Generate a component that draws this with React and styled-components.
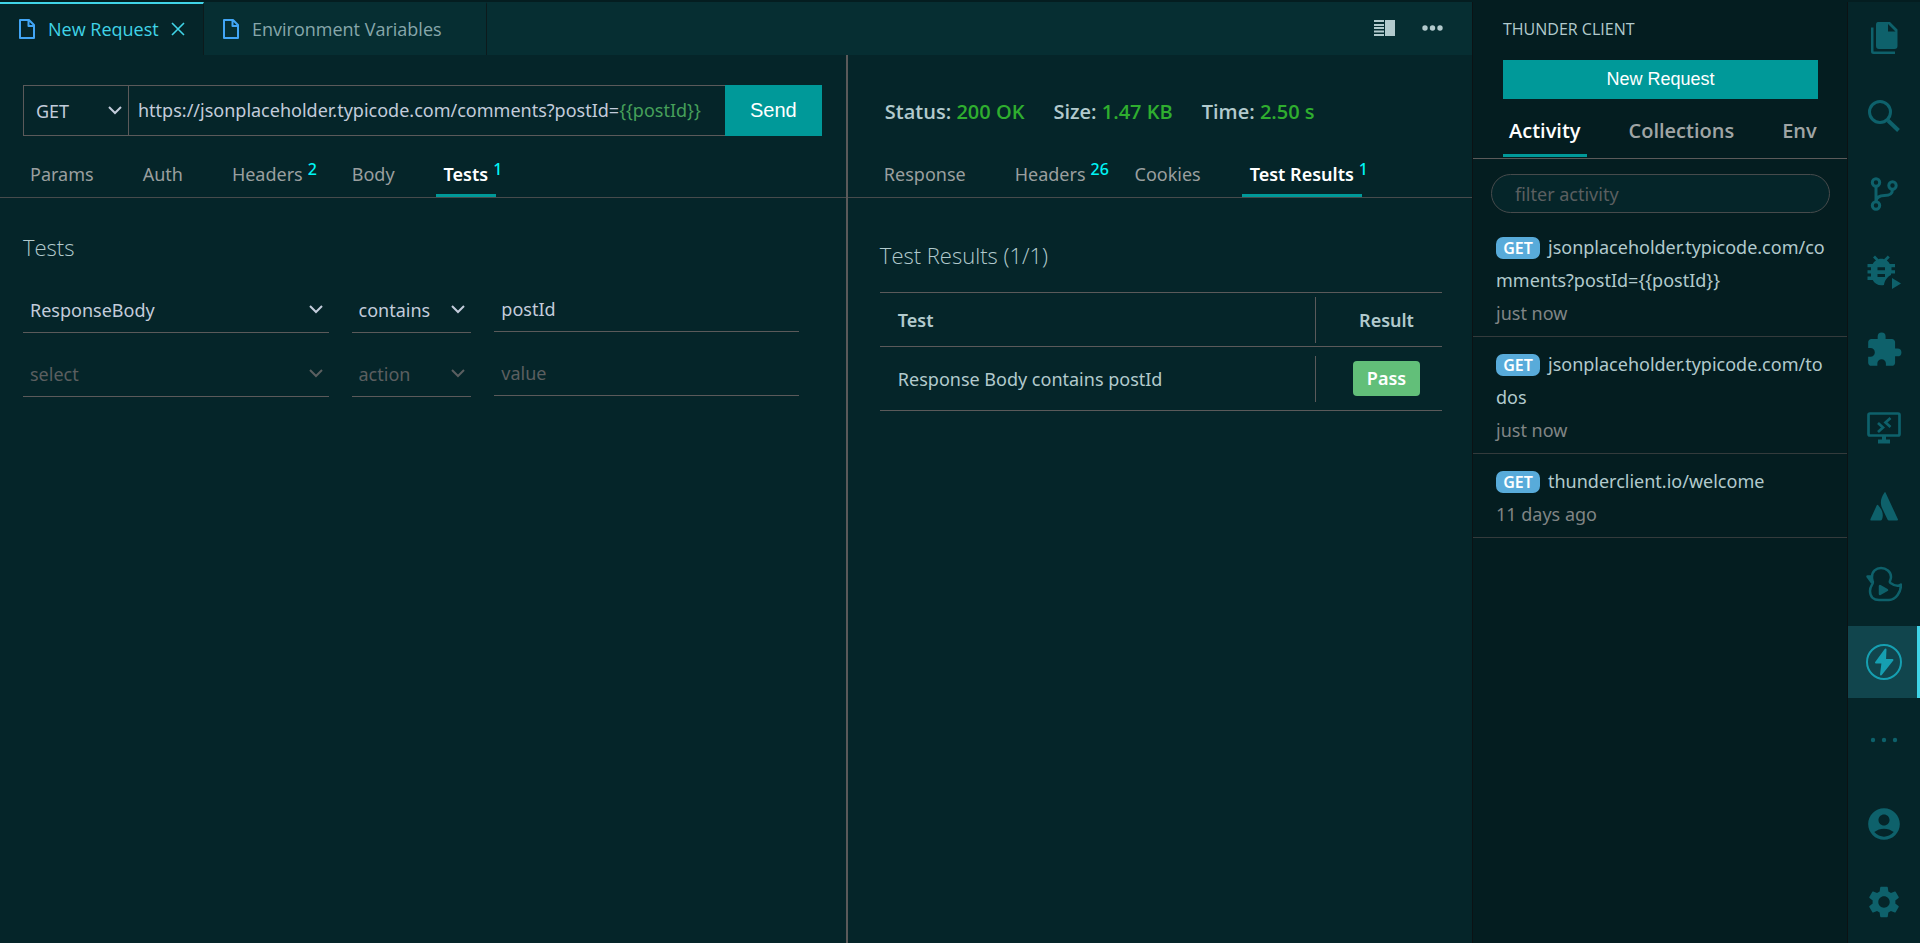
import React from "react"
import styled, { createGlobalStyle } from "styled-components"
import { MdExtension, MdAccountCircle, MdSettings } from "react-icons/md"

const GlobalStyle = createGlobalStyle`
  * {
    box-sizing: border-box;
  }
  body {
    margin: 0;
    background: #052529;
    color: #b2cacd;
    font-family: "Noto Sans", "Open Sans", sans-serif;
    font-size: 18px;
  }
  button, input, select {
    font: inherit;
    color: inherit;
    margin: 0;
  }
`

const Window = styled.div`
  display: flex;
  min-height: 100vh;
  border-top: 2px solid #041d20;
`
const Editor = styled.main`
  flex: 1;
  min-width: 0;
  display: flex;
  flex-direction: column;
`

/* editor tabs */
const TabBar = styled.div`
  display: flex;
  height: 53px;
  background: #062e32;
`
const FileTab = styled.button`
  display: flex;
  align-items: center;
  gap: 12px;
  height: 53px;
  width: ${(p) => (p.$active ? "204px" : "283px")};
  padding: 0 0 2px 18px;
  border: 0;
  border-top: 2px solid ${(p) => (p.$active ? "#40d4e7" : "transparent")};
  border-right: 1px solid #0c1a1c;
  background: ${(p) => (p.$active ? "#052529" : "#062e32")};
  color: ${(p) => (p.$active ? "#40d4e7" : "#87a7ab")};
  font-family: "Open Sans", "Noto Sans", sans-serif;
  white-space: nowrap;
`
const TabTitle = styled.span`
  display: flex;
  align-items: center;
  gap: 12px;
`
const EditorActions = styled.div`
  display: flex;
  align-items: center;
  gap: 27px;
  margin-left: auto;
  padding: 0 29px 2px 0;
`
const IconButton = styled.button`
  display: flex;
  padding: 0;
  border: 0;
  background: none;
`

/* request and response panes */
const Panes = styled.div`
  flex: 1;
  display: flex;
`
const RequestPane = styled.section`
  flex: 847 1 0;
  min-width: 0;
  border-right: 2px solid #5b5a5a;
`
const ResponsePane = styled.section`
  flex: 625 1 0;
  min-width: 0;
`
const UrlBar = styled.form`
  display: flex;
  height: 51px;
  margin: 30px 24px 0 23px;
`
const MethodBox = styled.div`
  width: 105px;
  border: 1px solid #5b5a5a;
  border-right: 0;
`
const UrlBox = styled.div`
  position: relative;
  flex: 1;
  min-width: 0;
  border: 1px solid #5b5a5a;
  border-right: 0;
  line-height: 49px;
  padding-left: 9px;
  color: #c3ccdb;
  white-space: pre;
  overflow: hidden;
`
const UrlInput = styled.input`
  position: absolute;
  inset: 0;
  width: 100%;
  padding: 0 0 0 9px;
  border: 0;
  outline: 0;
  background: transparent;
  color: transparent;
  caret-color: #c3ccdb;
`
const EnvVar = styled.span`
  color: #46a05a;
`
const SendButton = styled.button`
  width: 97px;
  border: 0;
  background: #009999;
  color: #ffffff;
  font-family: "Liberation Sans", Arial, sans-serif;
  font-size: 20px;
`
const SelectWrap = styled.div`
  display: flex;
  align-items: center;
  height: 100%;
  color: ${(p) => (p.$muted ? "#5b5f60" : "#c3ccdb")};
  svg {
    flex: none;
    margin-left: -20px;
    margin-right: 6px;
    pointer-events: none;
  }
`
const Select = styled.select`
  flex: 1;
  min-width: 0;
  height: 100%;
  padding: 0 20px 0 ${(p) => p.$pad || 7}px;
  border: 0;
  outline: 0;
  appearance: none;
  background: transparent;
`
const PaneTabs = styled.nav`
  display: flex;
  gap: 33px;
  height: 62px;
  margin-top: ${(p) => (p.$top || 0)}px;
  padding-left: ${(p) => p.$left}px;
  border-bottom: 1px solid #474b4c;
`
const PaneTab = styled.a`
  position: relative;
  padding: 22px 8px 0;
  line-height: 32px;
  font-weight: ${(p) => (p.$active ? 600 : 400)};
  color: ${(p) => (p.$active ? "#ffffff" : "#9a9f9f")};
  border-bottom: 3px solid ${(p) => (p.$active ? "#009999" : "transparent")};
  text-decoration: none;
  white-space: nowrap;
`
const Count = styled.sup`
  position: absolute;
  top: 20px;
  left: calc(100% - 3px);
  line-height: 26px;
  font-size: 16px;
  font-weight: 500;
  color: #00f6f6;
`
const Heading = styled.h1`
  margin: 0;
  font-family: "Open Sans", "Noto Sans", sans-serif;
  font-size: 22px;
  line-height: 32px;
  font-weight: 300;
`
const Tests = styled.div`
  padding: 33px 47px 0 23px;
`
const TestRow = styled.div`
  display: grid;
  grid-template-columns: 306fr 120fr 305fr;
  column-gap: 23px;
  align-items: start;
  height: 64px;
`
const Field = styled.div`
  height: 46px;
  border-bottom: 1px solid #5b5a5a;
`
const ValueInput = styled.input`
  width: 100%;
  height: 45px;
  padding: 0 0 0 7px;
  border: 0;
  border-bottom: 1px solid #5b5a5a;
  outline: 0;
  background: transparent;
  color: #c3ccdb;
  &::placeholder {
    color: #5b5f60;
    opacity: 1;
  }
`
const TestRows = styled.div`
  padding-top: 24px;
`
const StatusLine = styled.div`
  display: flex;
  gap: 29px;
  padding: 41px 0 0 37px;
  line-height: 32px;
  font-family: "Open Sans", "Noto Sans", sans-serif;
  font-size: 20px;
  font-weight: 600;
  white-space: nowrap;
`
const Good = styled.span`
  color: #2fae2f;
`
const Results = styled.div`
  padding: 41px 30px 0 32px;
`
const ResultTable = styled.table`
  width: 100%;
  margin-top: 21px;
  border-collapse: collapse;
  border-top: 1px solid #5b5a5a;
  tr {
    border-bottom: 1px solid #5b5a5a;
  }
  th, td {
    padding: 0;
    text-align: left;
  }
  th {
    height: 54px;
    font-weight: 600;
  }
  td {
    height: 64px;
  }
`
const TestName = styled.div`
  padding-left: 18px;
  line-height: 46px;
  border-right: 1px solid #5b5a5a;
`
const ResultCell = styled.div`
  padding-left: 15px;
  text-align: center;
`
const Pass = styled.span`
  display: inline-block;
  width: 67px;
  line-height: 35px;
  border-radius: 4px;
  background: #62bf79;
  color: #ffffff;
  font-weight: 600;
`

/* thunder client side bar */
const SideBar = styled.aside`
  width: 376px;
  border-left: 1px solid #0c1214;
  border-right: 1px solid #0c1214;
  background: #041d20;
`
const SideTitle = styled.h2`
  margin: 0;
  padding: 11px 0 0 30px;
  font-family: "Open Sans", "Noto Sans", sans-serif;
  font-size: 16px;
  line-height: 32px;
  font-weight: 400;
`
const NewRequest = styled.button`
  display: block;
  width: calc(100% - 59px);
  height: 39px;
  margin: 15px 29px 0 30px;
  border: 0;
  background: #009999;
  color: #ffffff;
  font-family: "Liberation Sans", Arial, sans-serif;
  font-size: 18px;
`
const SideTabs = styled.nav`
  display: flex;
  gap: 36px;
  height: 60px;
  padding-left: 30px;
  border-bottom: 1px solid #5b5a5a;
`
const SideTab = styled.a`
  height: 58px;
  padding: 16px 6px 0;
  line-height: 32px;
  font-family: "Open Sans", "Noto Sans", sans-serif;
  font-weight: 600;
  font-size: 20px;
  color: ${(p) => (p.$active ? "#ffffff" : "#a0a5a5")};
  border-bottom: 3px solid ${(p) => (p.$active ? "#009999" : "transparent")};
  text-decoration: none;
`
const Filter = styled.input`
  display: block;
  width: calc(100% - 35px);
  height: 39px;
  margin: 15px 17px 7px 18px;
  padding: 0 23px;
  border: 1px solid #474b4c;
  border-radius: 20px;
  outline: 0;
  background: #052529;
  &::placeholder {
    color: #5b5f60;
    opacity: 1;
  }
`
const History = styled.ul`
  margin: 0;
  padding: 0;
  list-style: none;
`
const HistoryItem = styled.li`
  padding: 11px 18px 6px 23px;
  border-bottom: 1px solid #343b3c;
  line-height: 33px;
  word-break: break-all;
`
const Method = styled.span`
  display: inline-block;
  width: 44px;
  margin-right: 8px;
  border-radius: 7px;
  background: #58abda;
  color: #ffffff;
  font-size: 16px;
  line-height: 22px;
  font-weight: 600;
  text-align: center;
`
const When = styled.div`
  color: #808585;
`

/* activity bar */
const ActivityBar = styled.nav`
  display: flex;
  flex-direction: column;
  gap: 6px;
  width: 72px;
  padding-bottom: 5px;
`
const Activity = styled.button`
  display: flex;
  align-items: center;
  justify-content: center;
  height: 72px;
  padding: 0 0 0 ${(p) => (p.$active ? "3px" : "0")};
  border: 0;
  border-right: ${(p) => (p.$active ? "3px solid #40d4e7" : "0")};
  background: ${(p) => (p.$active ? "#11454d" : "transparent")};
  color: ${(p) => (p.$active ? "#169fb1" : "#0e616b")};
  &:nth-last-child(2) {
    margin-top: auto;
  }
`

const Chevron = () => (
  <svg width="14" height="10" viewBox="0 0 14 10" fill="none" stroke="currentColor" strokeWidth="2">
    <path d="M1 1l6 6 6-6" />
  </svg>
)

const FileIcon = () => (
  <svg width="18" height="22" viewBox="0 0 18 22" fill="none" stroke="#42a5f5" strokeWidth="2">
    <path d="M2 2h9l5 5v13H2zM10.500 2v6H16" strokeLinejoin="round" />
  </svg>
)

const CloseIcon = () => (
  <svg width="14" height="14" viewBox="0 0 14 14" stroke="currentColor" strokeWidth="1.600">
    <path d="M1 1l12 12M13 1L1 13" />
  </svg>
)

const SplitIcon = () => (
  <svg width="21" height="16" viewBox="0 0 21 16" fill="#b2cacd">
    <path d="M0 0h10v2H0zM0 4h10v2H0zM0 7h10v2H0zM0 10.500h10v2H0zM0 14h10v2H0zM11 0h10v16H11z" />
  </svg>
)

const MoreIcon = () => (
  <svg width="21" height="6" viewBox="0 0 21 6" fill="#b2cacd">
    <circle cx="3" cy="3" r="2.700" />
    <circle cx="10.500" cy="3" r="2.700" />
    <circle cx="18" cy="3" r="2.700" />
  </svg>
)

const FilesIcon = () => (
  <svg width="36" height="36" viewBox="0 0 36 36" fill="currentColor">
    <path fillRule="evenodd" d="M12 2h12l7.500 7.500V26q0 3-3 3H13q-3 0-3-3V5q0-3 2-3zM22 4v7.500h7.500z" />
    <path d="M5 7.500h2.500V31.500H29V34H7.500Q5 34 5 31.500z" />
  </svg>
)

const SearchIcon = () => (
  <svg width="36" height="36" viewBox="0 0 36 36" fill="none" stroke="currentColor">
    <circle cx="14" cy="14" r="10.500" strokeWidth="3" />
    <path d="M22 22.500l10.500 10" strokeWidth="4" />
  </svg>
)

const BranchIcon = () => (
  <svg width="36" height="36" viewBox="0 0 36 36" fill="none" stroke="currentColor" strokeWidth="3">
    <circle cx="10" cy="6.500" r="3.700" />
    <circle cx="10" cy="29.500" r="3.700" />
    <circle cx="26.500" cy="9.500" r="3.700" />
    <path d="M10 10v16M26.500 13c0 6-4 6.500-8 6.500-5 0-8 1.500-8.500 6" />
  </svg>
)

const DebugIcon = () => (
  <svg width="36" height="36" viewBox="0 0 36 36" fill="currentColor">
    <path
      fillRule="evenodd"
      d="M9 1.500L7 3.500l3 3C8.500 7.500 7.500 8.500 6.700 10H1.500v3.300H5v3H1.500v3.300H5v3H1.500V26h5.200c2 4 6 6 11.300 5 .5-4 3-8 7-10V19.600h4v-3.300h-3.500v-3H29V10h-5.200c-.7-1.500-1.800-2.500-3-3.500l3-3-2-2-3.700 3.700c-2-.5-3.800-.5-5.600 0zM11.500 13.300H19v3h-7.500zM11.500 20H19v3h-7.500z"
    />
    <path d="M26 24l9 5.500-9 5.500z" />
  </svg>
)

const RemoteIcon = () => (
  <svg width="36" height="36" viewBox="0 0 36 36" fill="none" stroke="currentColor" strokeWidth="2.700">
    <rect x="2.500" y="3.500" width="31" height="22" rx="1.500" />
    <path d="M18 26v6M12 31.500h12" strokeWidth="4" />
    <path d="M12 13l5 4.500-5 4.500M24.500 8l-5 4.500 5 4.500" />
  </svg>
)

const AtlassianIcon = () => (
  <svg width="36" height="36" viewBox="0 0 36 36" fill="currentColor">
    <path d="M18.500 4.500c-4 6-5 11-1.500 17.500l4.500 9.500q.5 1 1.500 1h8q1.500 0 .8-1.500L19.500 4.500q-.5-.8-1 0z" />
    <path d="M12 17q-.6-.6-1.200.3L4.500 31q-.5 1.500 1 1.500h9q1 0 1.500-1c2-5 0-10.500-4-14.500z" />
  </svg>
)

const DuckIcon = () => (
  <svg width="36" height="36" viewBox="0 0 36 36" fill="none" stroke="currentColor" strokeWidth="2.500" strokeLinejoin="round">
    <path d="M6.500 14.500C8.500 18 4 19 4 25c0 6 4 9 9 9h10c7 0 12-8 12-15.500-3 2.500-7 1-10.500-1.500-2-1.500.5-2.500.5-6C25 5.500 20 2 15 2S6 5.500 6 11q0 2 .5 3.500z" />
    <path d="M5.500 10.500H1.500l4 5.500z" fill="currentColor" />
    <path d="M14 20v8l7-4z" fill="currentColor" />
  </svg>
)

const ThunderIcon = () => (
  <svg width="36" height="36" viewBox="0 0 36 36" fill="none" stroke="currentColor">
    <circle cx="18" cy="18" r="17" strokeWidth="2" />
    <path d="M19.500 5.500L10 18.500h6.500L15 30.500 26.500 16H19z" fill="currentColor" strokeWidth="2" strokeLinejoin="round" />
  </svg>
)

const DotsIcon = () => (
  <svg width="36" height="36" viewBox="0 0 36 36" fill="currentColor">
    <circle cx="7" cy="18" r="2.200" />
    <circle cx="18" cy="18" r="2.200" />
    <circle cx="29" cy="18" r="2.200" />
  </svg>
)

const activities = [
  { name: "Explorer", icon: <FilesIcon /> },
  { name: "Search", icon: <SearchIcon /> },
  { name: "Source Control", icon: <BranchIcon /> },
  { name: "Run and Debug", icon: <DebugIcon /> },
  { name: "Extensions", icon: <MdExtension size={38} /> },
  { name: "Remote Explorer", icon: <RemoteIcon /> },
  { name: "Atlassian", icon: <AtlassianIcon /> },
  { name: "Duck", icon: <DuckIcon /> },
  { name: "Thunder Client", icon: <ThunderIcon />, active: true },
  { name: "Additional Views", icon: <DotsIcon /> },
  { name: "Accounts", icon: <MdAccountCircle size={38} /> },
  { name: "Manage", icon: <MdSettings size={38} /> },
]

const requestTabs = [
  { label: "Params" },
  { label: "Auth" },
  { label: "Headers", count: 2 },
  { label: "Body" },
  { label: "Tests", count: 1, active: true },
]

const responseTabs = [
  { label: "Response" },
  { label: "Headers", count: 26 },
  { label: "Cookies" },
  { label: "Test Results", count: 1, active: true },
]

const testRows = [
  { id: 1, source: "ResponseBody", action: "contains", value: "postId" },
  { id: 2, source: "select", action: "action", value: "", muted: true },
]

const stats = [
  { label: "Status:", value: "200 OK" },
  { label: "Size:", value: "1.47 KB" },
  { label: "Time:", value: "2.50 s" },
]

const history = [
  { id: 1, url: "jsonplaceholder.typicode.com/comments?postId={{postId}}", when: "just now" },
  { id: 2, url: "jsonplaceholder.typicode.com/todos", when: "just now" },
  { id: 3, url: "thunderclient.io/welcome", when: "11 days ago" },
]

const Dropdown = ({ label, value, muted, pad }) => (
  <SelectWrap $muted={muted}>
    <Select aria-label={label} defaultValue={value} $pad={pad}>
      <option>{value}</option>
    </Select>
    <Chevron />
  </SelectWrap>
)

const TabList = ({ tabs, left, top }) => (
  <PaneTabs $left={left} $top={top}>
    {tabs.map((t) => (
      <PaneTab key={t.label} href="#" $active={t.active}>
        {t.label}
        {t.count && <Count>{t.count}</Count>}
      </PaneTab>
    ))}
  </PaneTabs>
)

const Request = () => {
  const [url, setUrl] = React.useState("https://jsonplaceholder.typicode.com/comments?postId={{postId}}")
  return (
    <RequestPane>
      <UrlBar onSubmit={(e) => e.preventDefault()}>
        <MethodBox>
          <Dropdown label="Method" value="GET" pad={12} />
        </MethodBox>
        <UrlBox>
          {url.split(/(\{\{.*?\}\})/).map((part, i) =>
            part.startsWith("{{") ? <EnvVar key={i}>{part}</EnvVar> : part
          )}
          <UrlInput aria-label="Request URL" value={url} onChange={(e) => setUrl(e.target.value)} />
        </UrlBox>
        <SendButton type="submit">Send</SendButton>
      </UrlBar>
      <TabList tabs={requestTabs} left={22} />
      <Tests>
        <Heading>Tests</Heading>
        <TestRows>
          {testRows.map((row) => (
            <TestRow key={row.id}>
              <Field>
                <Dropdown label="Source" value={row.source} muted={row.muted} />
              </Field>
              <Field>
                <Dropdown label="Action" value={row.action} muted={row.muted} />
              </Field>
              <ValueInput aria-label="Value" placeholder="value" defaultValue={row.value} />
            </TestRow>
          ))}
        </TestRows>
      </Tests>
    </RequestPane>
  )
}

const Response = () => (
  <ResponsePane>
    <StatusLine>
      {stats.map((s) => (
        <span key={s.label}>
          {s.label} <Good>{s.value}</Good>
        </span>
      ))}
    </StatusLine>
    <TabList tabs={responseTabs} left={28} top={8} />
    <Results>
      <Heading>Test Results (1/1)</Heading>
      <ResultTable>
        <thead>
          <tr>
            <th><TestName>Test</TestName></th>
            <th width="126"><ResultCell>Result</ResultCell></th>
          </tr>
        </thead>
        <tbody>
          <tr>
            <td><TestName>Response Body contains postId</TestName></td>
            <td><ResultCell><Pass>Pass</Pass></ResultCell></td>
          </tr>
        </tbody>
      </ResultTable>
    </Results>
  </ResponsePane>
)

const ThunderSideBar = () => (
  <SideBar>
    <SideTitle>THUNDER CLIENT</SideTitle>
    <NewRequest>New Request</NewRequest>
    <SideTabs>
      <SideTab href="#" $active>Activity</SideTab>
      <SideTab href="#">Collections</SideTab>
      <SideTab href="#">Env</SideTab>
    </SideTabs>
    <Filter aria-label="filter activity" placeholder="filter activity" />
    <History>
      {history.map((h) => (
        <HistoryItem key={h.id}>
          <Method>GET</Method>
          {h.url}
          <When>{h.when}</When>
        </HistoryItem>
      ))}
    </History>
  </SideBar>
)

export default function App() {
  return (
    <>
      <GlobalStyle />
      <Window>
        <Editor>
          <TabBar>
            <FileTab $active>
              <FileIcon />
              <TabTitle>New Request <CloseIcon /></TabTitle>
            </FileTab>
            <FileTab>
              <FileIcon />
              <TabTitle>Environment Variables</TabTitle>
            </FileTab>
            <EditorActions>
              <IconButton aria-label="Split editor"><SplitIcon /></IconButton>
              <IconButton aria-label="More actions"><MoreIcon /></IconButton>
            </EditorActions>
          </TabBar>
          <Panes>
            <Request />
            <Response />
          </Panes>
        </Editor>
        <ThunderSideBar />
        <ActivityBar>
          {activities.map((a) => (
            <Activity key={a.name} aria-label={a.name} $active={a.active}>
              {a.icon}
            </Activity>
          ))}
        </ActivityBar>
      </Window>
    </>
  )
}
